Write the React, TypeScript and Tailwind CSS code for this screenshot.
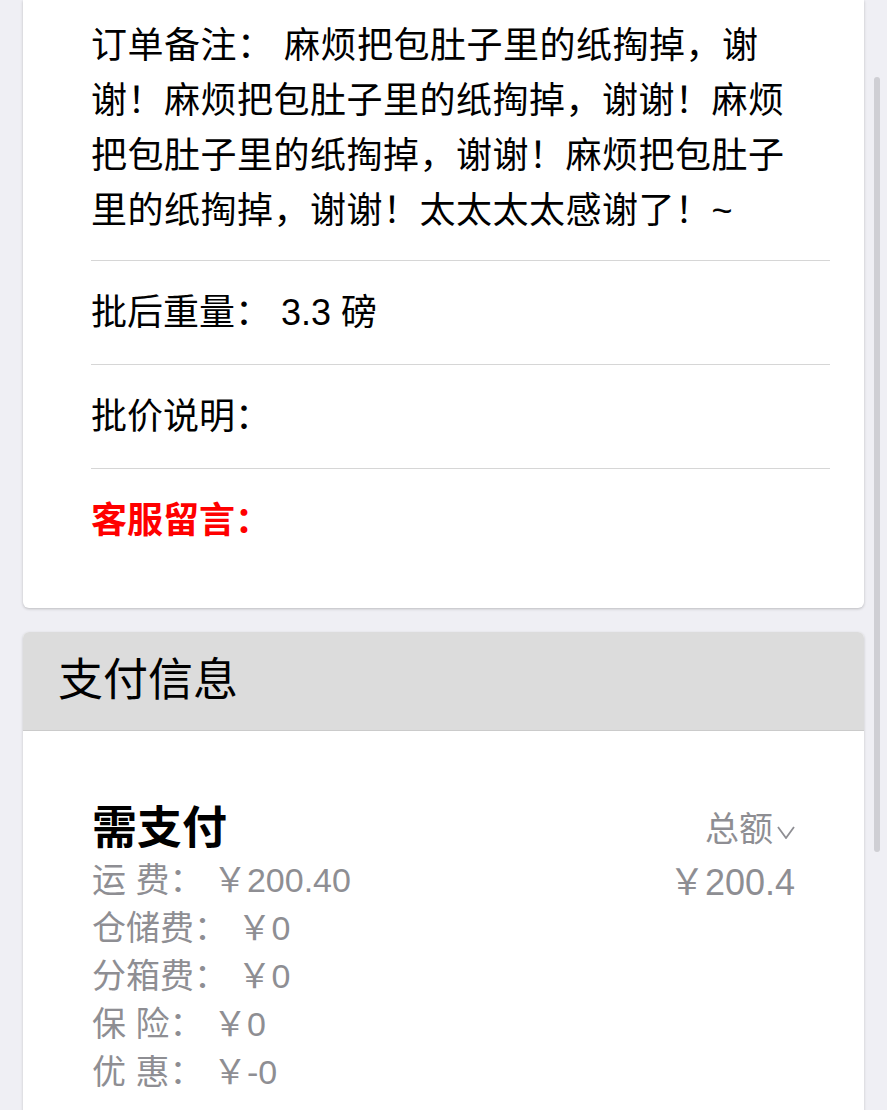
import React from 'react';

const font = '"Liberation Sans", "Noto Sans CJK SC", sans-serif';

const fees = [
  { label: '运 费：', value: '￥200.40' },
  { label: '仓储费：', value: '￥0' },
  { label: '分箱费：', value: '￥0' },
  { label: '保 险：', value: '￥0' },
  { label: '优 惠：', value: '￥-0' },
];

function InfoRow({ children, last }: { children: React.ReactNode; last?: boolean }) {
  return (
    <div className={`py-[24px] leading-[55px] ${last ? '' : 'border-b border-[#d6d6d6]'}`}>
      {children}
    </div>
  );
}

export default function App() {
  return (
    <div className="relative min-h-[1110px] h-[1110px] overflow-hidden bg-[#efeff4] px-[23px]" style={{ fontFamily: font }}>
      {/* order remarks card */}
      <div className="bg-white rounded-b-[6px] shadow-[0_1px_3px_rgba(0,0,0,0.22)] pl-[68px] pr-[34px] pt-[18px] pb-[36px] text-[36px] text-black">
        <div className="leading-[55px] tracking-[0.5px] pr-[26px] pb-[22px] border-b border-[#d6d6d6]">
          订单备注： 麻烦把包肚子里的纸掏掉，谢谢！麻烦把包肚子里的纸掏掉，谢谢！麻烦把包肚子里的纸掏掉，谢谢！麻烦把包肚子里的纸掏掉，谢谢！太太太太感谢了！~
        </div>
        <InfoRow>批后重量： 3.3 磅</InfoRow>
        <InfoRow>批价说明：</InfoRow>
        <InfoRow last>
          <span className="font-bold text-[#ff0000]">客服留言：</span>
        </InfoRow>
      </div>

      {/* payment card */}
      <div className="mt-[24px] bg-white rounded-[6px] shadow-[0_1px_3px_rgba(0,0,0,0.18)] overflow-hidden">
        <div className="h-[99px] bg-[#dcdcdc] border-b border-[#cbcbcb] flex items-center pl-[35px] text-[45px] text-black">
          支付信息
        </div>
        <div className="px-[69px] pt-[71px] pb-[40px] flex justify-between">
          <div>
            <div className="text-[45px] font-bold leading-[54px] text-black">需支付</div>
            {fees.map((f) => (
              <div key={f.label} className="text-[34px] leading-[48px] text-[#8e8e93]">
                {f.label} {f.value}
              </div>
            ))}
          </div>
          <div className="flex flex-col items-end text-[#8e8e93]">
            <div className="flex items-center gap-[4px] text-[34px] leading-[54px]">
              总额
              <svg width="18" height="13" viewBox="0 0 18 13" className="mt-[6px]">
                <polyline points="1,1 9,12 17,1" fill="none" stroke="#8e8e93" strokeWidth="1.8" />
              </svg>
            </div>
            <div className="text-[36px] leading-[54px]">￥200.4</div>
          </div>
        </div>
      </div>

      {/* overlay scrollbar */}
      <div className="absolute right-[7px] top-[77px] w-[6px] h-[775px] rounded-full bg-[#cfcfd4]" />
    </div>
  );
}
